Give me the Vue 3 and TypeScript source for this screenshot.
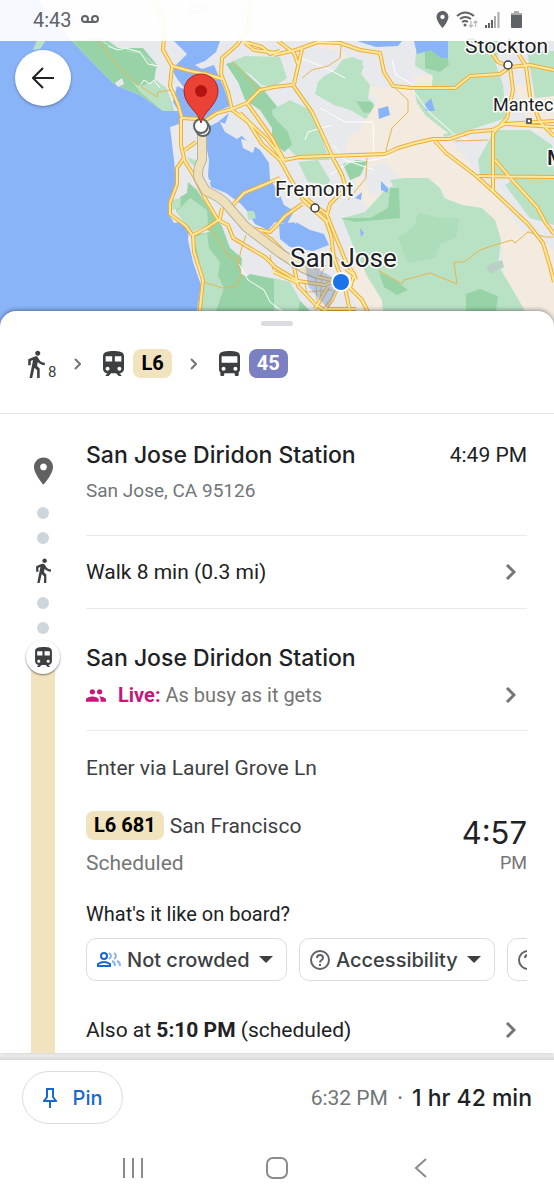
<script setup lang="ts">
import { ref } from 'vue'

interface Shape { d: string; kind: string }

const walkPath = 'M13.5 5.5c1.1 0 2-.9 2-2s-.9-2-2-2-2 .9-2 2 .9 2 2 2zM9.8 8.9L7 23h2.1l1.8-8 2.1 2v6h2v-7.5l-2.1-2 .6-3C14.8 12 16.8 13 19 13v-2c-1.9 0-3.5-1-4.3-2.4l-1-1.6c-.4-.6-1-1-1.7-1-.3 0-.5.1-.8.1L6 8.3V13h2V9.6l1.8-.7'
const trainPath = 'M12 2c-4 0-8 .5-8 4v9.5C4 17.43 5.57 19 7.5 19L6 20.5v.5h2.23l2-2H14l2 2h2v-.5L16.5 19c1.93 0 3.5-1.57 3.5-3.5V6c0-3.5-3.58-4-8-4zM7.5 17c-.83 0-1.5-.67-1.5-1.5S6.67 14 7.5 14s1.5.67 1.5 1.5S8.33 17 7.5 17zm3.5-7H6V6h5v4zm2 0V6h5v4h-5zm3.5 7c-.83 0-1.5-.67-1.5-1.5s.67-1.5 1.5-1.5 1.5.67 1.5 1.5-.67 1.5-1.5 1.5z'
const busPath = 'M4 16c0 .88.39 1.67 1 2.22V20c0 .55.45 1 1 1h1c.55 0 1-.45 1-1v-1h8v1c0 .55.45 1 1 1h1c.55 0 1-.45 1-1v-1.78c.61-.55 1-1.34 1-2.22V6c0-3.5-3.58-4-8-4s-8 .5-8 4v10zm3.5 1c-.83 0-1.5-.67-1.5-1.5S6.67 14 7.5 14s1.5.67 1.5 1.5S8.33 17 7.5 17zm9 0c-.83 0-1.5-.67-1.5-1.5s.67-1.5 1.5-1.5 1.5.67 1.5 1.5-.67 1.5-1.5 1.5zm1.5-6H6V6h12v5z'
const placePath = 'M12 2C8.13 2 5 5.13 5 9c0 5.25 7 13 7 13s7-7.75 7-13c0-3.87-3.13-7-7-7zm0 9.5c-1.38 0-2.5-1.12-2.5-2.5s1.12-2.5 2.5-2.5 2.5 1.12 2.5 2.5-1.12 2.5-2.5 2.5z'
const peoplePath = 'M16 11c1.66 0 2.99-1.34 2.99-3S17.66 5 16 5c-1.66 0-3 1.34-3 3s1.34 3 3 3zm-8 0c1.66 0 2.99-1.34 2.99-3S9.66 5 8 5C6.34 5 5 6.34 5 8s1.34 3 3 3zm0 2c-2.33 0-7 1.17-7 3.5V19h14v-2.5c0-2.33-4.67-3.5-7-3.5zm8 0c-.29 0-.62.02-.97.05 1.16.84 1.97 1.97 1.97 3.45V19h6v-2.5c0-2.33-4.67-3.5-7-3.5z'

const areas: Shape[] = [
  { kind: 'urban', d: 'M38 0H554V327H195L197 311 201 285 193 262 188 240 189 228 182 222 174 223 168 213 169 200 176 184 174 160 170 127 182 123 178 111 163 111 140 95 120 87 113 83 95 65 72 41Z' },
  { kind: 'green', d: 'M33 50 37 40H46L40 49Z' },
  { kind: 'leaf', d: 'M72 41 95 65 113 83 120 87 140 95 163 111H174L172 104 166 88 150 76 158 66 143 48 118 48 104 38Z' },
  { kind: 'green', d: 'M100 38 118 50 140 52 157 66 154 80 166 88 172 106 174 111H163L140 92Z' },
  { kind: 'leaf', d: 'M98 41 120 50 142 54 156 68 154 80 140 87 122 74Z' },
  { kind: 'sand', d: 'M300 44H340L344 80 360 87 410 88 420 103 452 135 410 144 385 152 345 152 350 135 378 125 378 100 360 85 345 52Z' },
  { kind: 'sand', d: 'M356 155 410 144 450 140 490 188 520 228 554 250V327H522L500 285 505 270 498 230 482 208 452 202 430 178 410 188 385 162 360 172 372 196 388 190 380 200 370 210 355 190Z' },
  { kind: 'sand', d: 'M515 85H554V135L530 130ZM350 245 375 260 395 275 384 311H360L352 295Z' },
  { kind: 'green', d: 'M226 64 245 56 280 57 287 78 272 88 262 85 250 74Z' },
  { kind: 'leaf', d: 'M226 64 234 62 262 88 280 110 290 125 292 145 280 140 260 110 245 100 238 82Z' },
  { kind: 'green', d: 'M272 110 290 100 310 110 320 125 324 145 330 160 300 160 285 145 274 130Z' },
  { kind: 'leaf', d: 'M272 115 288 132 292 145 284 152 272 140Z' },
  { kind: 'green', d: 'M323 77 335 70 342 60 352 58 364 66 361 74 370 85 368 98 380 110 379 125 364 118 350 110 334 105 315 94 318 82Z' },
  { kind: 'leaf', d: 'M356 101 372 102 376 112 364 113Z' },
  { kind: 'green', d: 'M417 41H500L496 65 503 85 506 118 470 130 445 137 430 120 418 108 413 84 432 84 433 76 415 66Z' },
  { kind: 'leaf', d: 'M425 48 445 46 449 65 440 72 425 68Z' },
  { kind: 'sand', d: 'M413 75 432 75V86H413ZM350 145 378 100 385 90 410 92 425 115 448 133 410 143 385 152 350 152Z' },
  { kind: 'green', d: 'M342 60 352 57 363 61 361 71 351 73 342 70Z' },
  { kind: 'green', d: 'M527 51H554V96L535 98ZM495 130 530 130 552 145 554 175H495ZM478 160 493 133 493 175 480 175ZM505 185 520 175H554V225L530 218Z' },
  { kind: 'green', d: 'M298 162 318 160 330 180 328 185 308 182Z' },
  { kind: 'green', d: 'M342 218 365 212 385 190 393 186 398 195 390 180 405 178 428 178 440 188 444 198 462 205 482 208 495 220 501 240 498 265 510 285 525 311 527 327H384L382 300 368 278 354 248Z' },
  { kind: 'leaf', d: 'M340 218 370 218 388 208 390 188 399 188 400 218 355 222ZM379 272 395 280 408 290 397 295 384 287ZM466 294 480 289 498 296 495 318 480 322 466 310Z' },
  { kind: 'pale', d: 'M398 238 415 225 418 212 440 218 459 218 456 238 440 244 435 258 408 263Z' },
  { kind: 'leaf', d: 'M343 164 357 160 368 160 360 176 350 180Z' },
  { kind: 'leaf', d: 'M188 182 197 190 215 218 222 226 230 248 242 258 241 274 270 285 282 298 300 327H196L203 280 195 256 193 235 210 232 190 217 176 211 180 197 187 193Z' },
  { kind: 'green', d: 'M194 237 207 233 209 248 220 262 218 276 224 288 216 311 214 327H196L204 284ZM172 200 181 198 180 208 172 210ZM176 212 190 198 207 210 208 225 192 232Z' },
  { kind: 'leaf', d: 'M250 274 280 280 310 311V327H216L222 300 240 282Z' },
  { kind: 'green', d: 'M187 157 200 162 198 168 190 163ZM187 3H205L210 12 190 16ZM274 278 290 282 300 300 298 312 274 312Z' },
  { kind: 'grey', d: 'M486 266 502 260 504 267 490 274Z' },
  { kind: 'water', d: 'M174 41H220L216 52 205 61 195 65 202 69 214 65 219 77 224 88 230 106 215 112 208 120 183 118 173 102 177 86 186 90 178 80 173 72 175 66 187 54Z' },
  { kind: 'water', d: 'M208 127 218 122 229 113 225 124 238 132 248 142 260 150 269 163 270 180 278 190 284 205 294 211 287 224 275 222 268 230 255 224 247 211 241 204 226 193 211 187 208 176 209 160 206 145Z' },
  { kind: 'water', d: 'M279 224 296 222 310 230 324 234 329 245 313 251 290 247 280 239Z' },
  { kind: 'water', d: 'M357 41H402L398 46 376 47ZM414 41H448V58H441L431 50 417 54ZM425 104 431 98 435 111 426 111ZM378 109 388 106 390 115 379 119ZM381 181 388 188 388 193 381 190ZM355 198 362 192 361 200ZM360 228 364 233 361 237Z' },
  { kind: 'urban', d: 'M220 122 235 127 243 135 237 139 225 132ZM241 139 256 143 253 153 243 148ZM204 180 211 180 209 186ZM182 3 200 9 198 12ZM115 83 122 78 124 84 118 87ZM290 218 298 218 296 224Z' },
  { kind: 'green', d: 'M247 211 254 211 256 218 248 220Z' }
]

const localRoads: string[] = [
  'M108 46 118 50 125 48 140 52 148 64 158 66M139 87 144 80 150 84 154 80 160 88M302 58 330 70 345 78M333 145 345 160 374 170M374 160 373 122 345 122 320 108M305 140 308 132 332 125M392 60 396 75 412 84 414 92 430 113 455 135 468 140M239 264 248 280 264 290 270 302 282 311M330 175 350 162 374 160 390 156M274 306 290 316'
]

const minorRoads: string[] = [
  'M98 41 110 56 125 74 143 88 157 97 158 92 172 90M302 78 312 70 328 66 340 58 341 46M393 86 408 100 408 112 392 128 386 150 388 154M208 225 218 240 228 255 238 262 241 275 236 287 222 288 204 282M378 270 402 284 404 280 430 273 457 284 454 262 464 262 480 250 495 245 512 240 515 243 528 232 545 237 554 237M367 158 366 178 348 200M246 235 241 250 238 265M270 255 273 270M232 62 245 75 258 90M455 141 488 140',
  'M315 272 317 300M322 275 320 304M308 292 332 290M330 248 342 265M312 277 335 279M305 284 308 299M326 265 318 280'
]

const majorRoads: string[] = [
  'M153 0 165 24 163 50 172 66 170 86 178 104 182 118 198 119',
  'M172 66 190 71 206 74 222 79',
  'M250 0 249 28 237 45 222 58 221 74 228 92 232 110 248 122 262 144 280 160 290 178 303 200 328 222',
  'M245 42 262 47 270 54 280 51',
  'M200 124 217 113 232 109 247 103 260 90 274 87 292 85',
  'M240 113 255 128 266 138 276 150 284 162',
  'M247 103 262 124 272 138 284 160 300 157 385 154 398 148 415 143 433 139 450 139 470 132 492 130 505 124 554 121',
  'M181 118 181 145 184 158 177 168 177 184 170 203 170 214 186 226 193 236 194 252 203 280 198 327',
  'M183 158 194 176 206 200 218 220 228 225 233 238 248 247 265 257 275 267 298 281 325 285 345 277',
  'M185 150 196 142M193 235 208 227 220 219 222 208',
  'M232 206 244 193 280 178',
  'M250 228 270 232 276 226 285 216 302 204',
  'M256 229 272 240 290 258 308 274 322 278 341 282',
  'M274 55 296 50 318 42 340 43 360 50 380 53 384 72 393 86 412 88 455 88 470 76 500 74 510 67 530 65 554 70',
  'M293 85 312 112 324 138 334 160 342 175 346 188 330 204 327 215 335 235 346 262 354 274 356 280',
  'M302 49 294 84M278 41 294 53 298 64M245 43 254 50 276 53',
  'M303 200 326 221 331 235 334 258 345 288 350 311',
  'M346 269 354 275 350 288 362 300 372 320M340 282 332 300 325 309 356 309',
  'M293 262 298 286 315 304 327 312M274 272 298 283M328 287 315 309M302 195 318 208 328 215',
  'M490 50 498 62 510 67 513 90 507 118 496 130 493 133 493 192',
  'M516 50 526 66 530 96 540 122 554 136M507 124 554 127',
  'M435 141 446 153 475 175 494 192 528 224 543 243 550 266 554 282',
  'M478 176 554 177M495 160 515 183 537 207 545 222 554 234'
]

const crowding = ref('Not crowded')
const access = ref('Accessibility')
const temperature = ref('Temperature')
</script>

<template>
  <div class="screen">
    <header class="map">
      <svg class="map-art" viewBox="0 0 554 327" preserveAspectRatio="xMidYMid slice" role="img" aria-label="Map of the route">
        <path v-for="(a, i) in areas" :key="'a' + i" :class="a.kind" :d="a.d" />
        <path v-for="(d, i) in localRoads" :key="'l' + i" class="local" :d="d" />
        <path v-for="(d, i) in minorRoads" :key="'m' + i" class="minor" :d="d" />
        <path v-for="(d, i) in majorRoads" :key="'c' + i" class="casing" :d="d" />
        <path v-for="(d, i) in majorRoads" :key="'f' + i" class="fill" :d="d" />
        <path class="route-edge" d="M202 128V160Q196 172 199 179L206 191Q222 198 227 205L246 227 280 253 303 268 318 274" />
        <path class="route-body" d="M202 128V160Q196 172 199 179L206 191Q222 198 227 205L246 227 280 253 303 268 318 274" />
        <path class="beam" d="M341 282 305 262 308 286 328 309Z" />
        <g class="town">
          <circle cx="508" cy="65" r="4" />
          <circle cx="315" cy="208" r="4" />
          <rect x="527" y="119" width="4" height="4" />
        </g>
        <g class="label">
          <text x="465" y="53" font-size="21">Stockton</text>
          <text x="493" y="111" font-size="18">Mantec</text>
          <text x="275" y="196" font-size="21">Fremont</text>
          <text x="290" y="267" font-size="26">San Jose</text>
          <text x="547" y="165" font-size="21" font-weight="500">M</text>
        </g>
        <circle class="stop-ring" cx="203" cy="129" r="7" />
        <circle class="stop-ring" cx="201" cy="126" r="7" />
        <path class="marker" d="M201 123C199 112 184 105 184 91A17 17 0 0 1 218 91C218 105 203 112 201 123Z" />
        <circle class="marker-core" cx="201" cy="91" r="6" />
        <circle class="me-edge" cx="341" cy="282" r="10" />
        <circle class="me" cx="341" cy="282" r="8" />
      </svg>

      <div class="status">
        <span>4:43</span>
        <svg width="18" height="9" viewBox="0 0 18 9" class="line">
          <circle cx="4" cy="4" r="3" /><circle cx="14" cy="4" r="3" /><path d="M4 7H14" />
        </svg>
        <div class="status-icons">
          <svg width="13" height="17" viewBox="5 2 14 20"><path :d="placePath" /></svg>
          <svg width="22" height="17" viewBox="0 0 22 17">
            <g fill="none" stroke="currentColor" stroke-width="2"><path d="M1 5Q9 -2 18 5" /><path d="M4 8Q9 4 15 8" /><path d="M6 11Q9 9 12 11" /></g>
            <circle cx="9" cy="14" r="1.5" />
            <g fill="none" stroke="#b8babc" stroke-width="1.3"><path d="M15 10V16M13 14 15 16 17 14M19.5 16V10M17.5 12 19.5 10 21.5 12" /></g>
          </svg>
          <svg width="15" height="16" viewBox="0 0 15 16">
            <path d="M0 13H2V16H0ZM3 11H5V16H3ZM6 8H8V16H6Z" /><path fill="#aaacae" d="M9 4H11V16H9ZM12.5 0H14.5V16H12.5Z" />
          </svg>
          <svg class="battery" width="11" height="17" viewBox="0 0 11 17"><path fill="#aaacae" d="M3 0H8V2H11V5H0V2H3Z" /><path d="M0 4H11V16Q11 17 10 17H1Q0 17 0 16Z" /></svg>
        </div>
      </div>

      <button class="back" type="button" aria-label="Back">
        <svg width="22" height="22" viewBox="0 0 22 22"><path d="M22 11H2M11 1 1 11 11 21" /></svg>
      </button>
    </header>

    <main class="sheet">
      <div class="handle"></div>

      <div class="summary">
        <svg width="17" height="28" viewBox="6 1 13 22"><path :d="walkPath" /></svg>
        <span class="walk-min">8</span>
        <svg class="sep" width="7" height="12" viewBox="0 0 7 12"><path d="M1 1 6 6 1 11" /></svg>
        <svg width="21" height="25" viewBox="4 2 16 19"><path :d="trainPath" /></svg>
        <span class="badge cream">L6</span>
        <svg class="sep" width="7" height="12" viewBox="0 0 7 12"><path d="M1 1 6 6 1 11" /></svg>
        <svg width="21" height="25" viewBox="4 2 16 19"><path :d="busPath" /></svg>
        <span class="badge violet">45</span>
      </div>

      <div class="trip">
        <div class="rail">
          <svg class="rail-pin" width="19" height="28" viewBox="5 2 14 20"><path :d="placePath" /></svg>
          <i class="dot"></i><i class="dot"></i>
          <svg class="rail-walk" width="15" height="25" viewBox="6 1 13 22"><path :d="walkPath" /></svg>
          <i class="dot"></i><i class="dot"></i>
          <div class="rail-stop"><svg width="17" height="20" viewBox="4 2 16 19"><path :d="trainPath" /></svg></div>
          <div class="rail-line"></div>
        </div>

        <div class="steps">
          <section class="step origin">
            <div class="row"><h2>San Jose Diridon Station</h2><time>4:49 PM</time></div>
            <p class="address">San Jose, CA 95126</p>
          </section>

          <section class="step walk">
            <span>Walk 8 min (0.3 mi)</span>
            <svg class="go" width="11" height="16" viewBox="0 0 11 16"><path d="M2 1 9 8 2 15" /></svg>
          </section>

          <section class="step station">
            <h2>San Jose Diridon Station</h2>
            <div class="row live">
              <svg width="20" height="13" viewBox="1 5 22 14"><path :d="peoplePath" /></svg>
              <p><b>Live:</b> As busy as it gets</p>
              <svg class="go" width="11" height="16" viewBox="0 0 11 16"><path d="M2 1 9 8 2 15" /></svg>
            </div>
          </section>

          <section class="ride">
            <p class="dim">Enter via Laurel Grove Ln</p>
            <div class="row departure">
              <div>
                <div class="line-name"><span class="badge cream">L6 681</span><span class="dim">San Francisco</span></div>
                <p class="scheduled">Scheduled</p>
              </div>
              <div class="when"><span class="clock">4:57</span><span class="ampm">PM</span></div>
            </div>
            <p class="question">What's it like on board?</p>
            <div class="chips">
              <label class="chip">
                <svg class="crowd" width="24" height="15" viewBox="0 0 24 15">
                  <path class="faint" d="M12 1Q16 4 12 7M17 1Q21 4 17 7M15 9Q18 10 18 14M20 9Q23 10 23 14" />
                  <circle cx="7" cy="4" r="3" /><path d="M1 14V12Q7 8 13 12V14Z" />
                </svg>
                <select v-model="crowding" aria-label="Crowding"><option>Not crowded</option></select>
                <svg class="caret" width="14" height="7" viewBox="0 0 14 7"><path d="M0 0H14L7 7Z" /></svg>
              </label>
              <label class="chip">
                <svg class="help" width="20" height="20" viewBox="0 0 20 20"><circle cx="10" cy="10" r="9" /><path d="M7 8Q7 5 10 5T13 8C13 10 10 10 10 12.5M10 14V16" /></svg>
                <select v-model="access" aria-label="Accessibility details"><option>Accessibility</option></select>
                <svg class="caret" width="14" height="7" viewBox="0 0 14 7"><path d="M0 0H14L7 7Z" /></svg>
              </label>
              <label class="chip">
                <svg class="help" width="20" height="20" viewBox="0 0 20 20"><circle cx="10" cy="10" r="9" /><path d="M7 8Q7 5 10 5T13 8C13 10 10 10 10 12.5M10 14V16" /></svg>
                <select v-model="temperature" aria-label="Temperature on board"><option>Temperature</option></select>
              </label>
            </div>
            <div class="row also">
              <p>Also at <b>5:10 PM</b> (scheduled)</p>
              <svg class="go" width="11" height="16" viewBox="0 0 11 16"><path d="M2 1 9 8 2 15" /></svg>
            </div>
          </section>
        </div>
      </div>
    </main>

    <footer>
      <div class="shade"></div>
      <div class="total">
        <button class="pin" type="button">
          <svg width="14" height="20" viewBox="0 0 14 20"><path d="M3 1H11M4 1V9L1 13H13L10 9V1M7 13V20" /></svg>
          Pin
        </button>
        <p><span class="arrive">6:32 PM</span><span class="mid">·</span><strong>1 hr 42 min</strong></p>
      </div>
      <nav class="keys">
        <button type="button" aria-label="Recent apps"><svg width="22" height="22" viewBox="0 0 22 22"><path d="M2 1V21M11 1V21M20 1V21" /></svg></button>
        <button type="button" aria-label="Home"><svg width="22" height="22" viewBox="0 0 22 22"><rect x="1" y="1" width="20" height="20" rx="6" /></svg></button>
        <button type="button" aria-label="Back"><svg width="22" height="22" viewBox="0 0 22 22"><path d="M16 2 6 11 16 20" /></svg></button>
      </nav>
    </footer>
  </div>
</template>

<style>
body { margin: 0; background: #fff; }
</style>

<style scoped>
.screen { display: flex; flex-direction: column; min-height: 100vh; overflow: hidden; background: #fff; color: #202124; font-family: Roboto, "Liberation Sans", sans-serif; font-size: 21px; line-height: 24px; }
.screen * { box-sizing: border-box; }
p, h2 { margin: 0; }
button { padding: 0; border: 0; background: none; font: inherit; }
svg { display: block; flex: none; fill: currentColor; }

.map { position: relative; background: #8ab4f8; }
.map-art { width: 100%; height: 327px; background: #8ab4f8; }
.urban { fill: #e8e9ed; }
.sand { fill: #f3ebdf; }
.green { fill: #b9e2c5; }
.pale { fill: #aeddbb; }
.leaf { fill: #98d3a8; }
.grey { fill: #bccfc4; }
.water { fill: #8ab4f8; }
.local, .minor, .casing, .fill, .route-edge, .route-body { fill: none; stroke-linejoin: round; }
.local { stroke: #fff; stroke-width: 1; }
.minor { stroke: #e6b54e; stroke-width: 1; }
.casing { stroke: #f0ac36; stroke-width: 4; }
.fill { stroke: #feea9c; stroke-width: 2; }
.route-edge { stroke: #b9b198; stroke-width: 10; }
.route-body { stroke: #eee0bd; stroke-width: 8; }
.beam { fill: #5b87cc; opacity: .35; }
.town { fill: #fff; stroke: #3c4043; stroke-width: 1.5; }
.label { fill: #202124; stroke: #fff; stroke-width: 3; stroke-linejoin: round; paint-order: stroke; }
.stop-ring { fill: #fff; stroke: #5f6368; stroke-width: 2; }
.marker { fill: #ea4335; stroke: #b5221b; stroke-width: 1; }
.marker-core { fill: #b31412; }
.me-edge { fill: #fff; }
.me { fill: #1a73e8; }

.status { position: absolute; top: 0; left: 0; right: 0; display: flex; align-items: center; gap: 9px; height: 41px; padding: 0 32px 2px 33px; background: rgba(255, 255, 255, .92); color: #5f6368; font-size: 20px; }
.line { fill: none; stroke: currentColor; stroke-width: 2; }
.status-icons { display: flex; align-items: center; gap: 7px; margin-left: auto; }
.battery { margin-left: 4px; }
.back { position: absolute; top: 50px; left: 15px; display: grid; place-items: center; width: 56px; height: 56px; border-radius: 50%; background: #fff; color: #202124; box-shadow: 0 1px 3px rgba(0, 0, 0, .35); }
.back svg { fill: none; stroke: currentColor; stroke-width: 2; }

.sheet { position: relative; display: flex; flex: 1; flex-direction: column; margin-top: -16px; border-radius: 16px 16px 0 0; background: #fff; box-shadow: 0 -1px 4px rgba(0, 0, 0, .4); }
.handle { align-self: center; width: 32px; height: 5px; margin-top: 10px; border-radius: 3px; background: #dadce0; }
.summary { display: flex; align-items: center; height: 88px; padding: 0 28px 12px; border-bottom: 1px solid #e3e4e6; color: #3c4043; }
.walk-min { align-self: flex-end; margin-left: 3px; padding-bottom: 20px; font-size: 15px; line-height: 18px; }
.sep { margin: 0 22px 0 18px; fill: none; stroke: #70757a; stroke-width: 2; }
.badge { padding: 0 8px; border-radius: 8px; font-size: 20px; font-weight: 700; line-height: 29px; }
.summary .badge { margin-left: 9px; }
.cream { background: #f1e3bd; color: #000; }
.violet { background: #7b80c2; color: #fff; }

.trip { display: flex; flex: 1; }
.rail { display: flex; flex: none; flex-direction: column; align-items: center; width: 86px; padding-top: 43px; color: #3c4043; }
.rail-pin { margin-bottom: 9px; color: #616161; }
.dot { flex: none; width: 12px; height: 12px; margin-top: 13px; border-radius: 50%; background: #ced6dc; }
.rail-walk { margin-top: 14px; }
.rail-walk + .dot { margin-top: 14px; }
.rail-stop { position: relative; z-index: 1; display: grid; flex: none; place-items: center; width: 34px; height: 34px; margin-top: 6px; border-radius: 50%; background: #fff; box-shadow: 0 1px 2px rgba(0, 0, 0, .5); }
.rail-line { flex: 1; width: 24px; margin-top: -8px; background: #f1e3bd; }

.steps { flex: 1; min-width: 0; padding-right: 27px; }
.row { display: flex; align-items: center; justify-content: space-between; }
.step { border-bottom: 1px solid #e8eaed; }
.origin { padding: 27px 0 32px; }
h2 { font-family: Inter, Roboto, sans-serif; font-size: 23px; font-weight: 500; line-height: 28px; }
.address { margin-top: 10px; color: #70757a; font-size: 19px; }
.walk { display: flex; align-items: center; justify-content: space-between; height: 73px; }
.go { margin-right: 11px; fill: none; stroke: #757575; stroke-width: 3; }
.station { padding: 35px 0 23px; }
.live { margin-top: 11px; color: #757575; font-size: 20px; }
.live p { flex: 1; margin-left: 12px; }
.live > svg:first-child { color: #c5187d; }
.live b { color: #c5187d; }
.ride { padding: 25px 0 10px; }
.dim { color: #3c4043; }
.departure { align-items: flex-end; margin-top: 31px; }
.line-name { display: flex; align-items: center; gap: 6px; }
.scheduled { margin-top: 11px; color: #757575; }
.when { display: flex; flex-direction: column; align-items: flex-end; }
.clock { font-family: Inter, Roboto, sans-serif; font-size: 31px; line-height: 36px; }
.ampm { color: #757575; font-size: 18px; }
.question { margin-top: 27px; font-size: 20px; }
.chips { display: flex; gap: 12px; margin-top: 12px; overflow: hidden; }
.chip { display: flex; flex: none; align-items: center; height: 43px; padding: 0 13px 0 10px; border: 1px solid #dadce0; border-radius: 10px; color: #3c4043; }
.chip select { margin: 0 9px 0 6px; padding: 0; border: 0; appearance: none; background: none; color: inherit; font: 500 20px/24px Inter, Roboto, sans-serif; }
.help { fill: none; stroke: #5f6368; stroke-width: 2; }
.crowd { fill: none; stroke: #1967d2; stroke-width: 2; }
.faint { stroke: #8ab4f8; }
.also { margin-top: 37px; }
.also b { font-weight: 700; }

.shade { height: 7px; background: linear-gradient(#fafafa, #d6d6d6); }
.total { display: flex; align-items: center; justify-content: space-between; height: 75px; padding: 0 22px; font-family: Inter, Roboto, sans-serif; }
.pin { display: flex; align-items: center; justify-content: center; gap: 16px; width: 101px; height: 53px; border: 1px solid #dadce0; border-radius: 27px; color: #1967d2; font-size: 20px; font-weight: 500; }
.pin svg { fill: none; stroke: currentColor; stroke-width: 2; }
.total p { display: flex; align-items: center; }
.arrive { color: #70757a; font-family: Roboto, sans-serif; font-size: 21px; }
.mid { margin: 0 9px; color: #70757a; }
.total strong { font-size: 23px; font-weight: 500; }
.keys { display: flex; justify-content: space-evenly; align-items: center; height: 65px; }
.keys svg { fill: none; stroke: #8b8b8b; stroke-width: 2; }
</style>
